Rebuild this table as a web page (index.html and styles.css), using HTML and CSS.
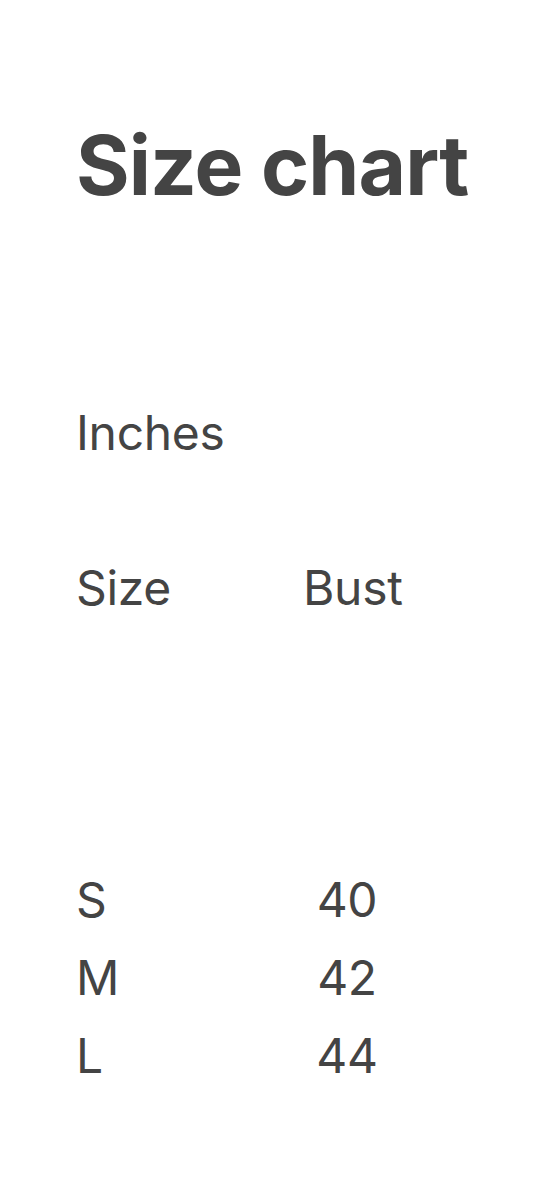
FILE: index.html
```html
<!DOCTYPE html>
<html lang="en">
<head>
<meta charset="utf-8">
<title>Size chart</title>
<link rel="stylesheet" href="styles.css">
</head>
<body>
<main class="page">
  <h1 class="title">Size chart</h1>
  <p class="unit">Inches</p>
  <div class="chart">
    <div class="row head">
      <span class="cell size">Size</span>
      <span class="cell bust">Bust</span>
    </div>
    <div class="rows">
      <div class="row">
        <span class="cell size">S</span>
        <span class="cell num">40</span>
      </div>
      <div class="row">
        <span class="cell size">M</span>
        <span class="cell num">42</span>
      </div>
      <div class="row">
        <span class="cell size">L</span>
        <span class="cell num">44</span>
      </div>
    </div>
  </div>
</main>
</body>
</html>
```

FILE: styles.css
```css
html, body {
  margin: 0;
  padding: 0;
  background: #ffffff;
}

body {
  font-family: Inter, "Liberation Sans", sans-serif;
  color: #444444;
}

.page {
  padding: 117px 0 0 76px;
}

.title {
  margin: 0;
  font-size: 82px;
  line-height: 98px;
  font-weight: 700;
  letter-spacing: -0.9px;
}

.unit {
  margin: 188px 0 0 0;
  font-size: 48px;
  line-height: 60px;
  font-weight: 400;
  letter-spacing: -0.3px;
}

.chart {
  margin-top: 86px;
}

.row {
  display: grid;
  grid-template-columns: 227px 88px;
  font-size: 48px;
  line-height: 78px;
  letter-spacing: -0.3px;
}

.rows {
  margin-top: 234px;
}

.num {
  text-align: center;
}
```
